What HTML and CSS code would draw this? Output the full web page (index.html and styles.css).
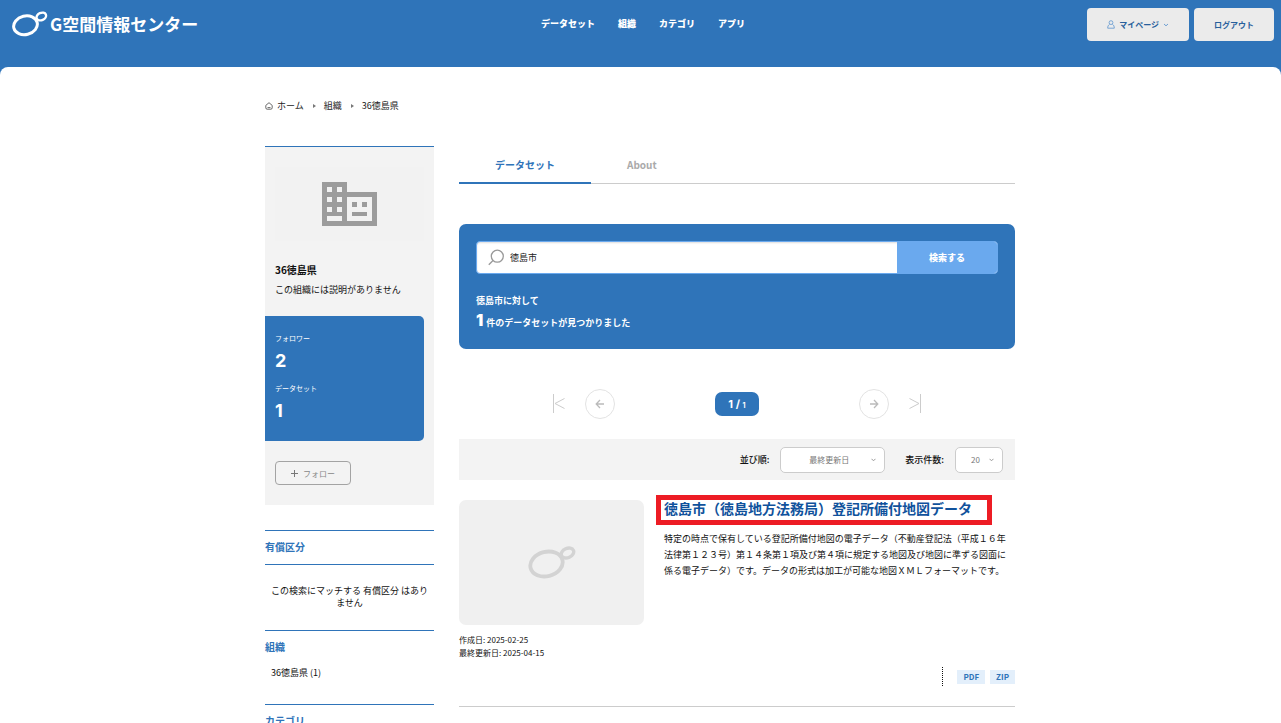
FILE: index.html
```html
<!doctype html>
<html lang="ja">
    <head>
        <title>36徳島県 - G空間情報センター</title>
        <meta charset="UTF-8">
        <meta name="viewport" content="width=device-width, initial-scale=1">
        <link rel="stylesheet" href="styles.css">
    </head>

    <body>
        <!--Header Start-->
        <header class="header">
            <a href="#" class="logo">
                <svg width="36" height="26" viewBox="0 0 36 26" fill="none" stroke="#fff">
                    <ellipse cx="13.5" cy="14.3" rx="12" ry="9.3" stroke-width="3" transform="rotate(-14 13.5 14.3)"/>
                    <ellipse cx="29.3" cy="5.5" rx="5" ry="3.6" stroke-width="2.4" transform="rotate(-24 29.3 5.5)"/>
                </svg>
                <span>G空間情報センター</span>
            </a>
            <nav class="navbar">
                <a href="#">データセット</a>
                <a href="#">組織</a>
                <a href="#">カテゴリ</a>
                <a href="#">アプリ</a>
            </nav>
            <div class="account">
                <button type="button" class="mypage">
                    <svg width="8" height="9" viewBox="0 0 8 9" fill="none" stroke="#6e9fd2" stroke-width="0.9">
                        <circle cx="4" cy="2.6" r="1.9"/>
                        <path d="M2.6 4.4C1.2 5 .7 6.4.7 8.2h6.6c0-1.8-.5-3.2-1.9-3.8"/>
                    </svg>
                    マイページ
                    <svg width="6" height="4" viewBox="0 0 6 4" fill="none" stroke="#6e9fd2" stroke-width="1"><path d="M1 1l2 1.8L5 1"/></svg>
                </button>
                <button type="button" class="logout">ログアウト</button>
            </div>
        </header>
        <!--Header End-->

        <!--Content Start-->
        <main class="page">
            <nav class="breadcrumb">
                <svg width="8" height="8" viewBox="0 0 8 8" fill="none" stroke="#444" stroke-width="0.8">
                    <path d="M.8 3.4L4 .7l3.2 2.7v2.4q0 1.4-1.4 1.4H2.2Q.8 7.2.8 5.8z"/>
                    <path d="M2.5 5.6h3"/>
                </svg>
                <a href="#" class="home">ホーム</a>
                <span class="arrow"></span>
                <a href="#">組織</a>
                <span class="arrow"></span>
                <a href="#">36徳島県</a>
            </nav>

            <div class="columns">
                <!--Sidebar-->
                <aside class="sidebar">
                    <section class="org">
                        <div class="org-image">
                            <svg width="55" height="44" viewBox="0 0 55 44">
                                <path fill="#9c9c9c" fill-rule="evenodd" d="M0 0h25v10h30v34H0zM5 5v5h5V5zM15 5v5h5V5zM5 15v5h5v-5zM15 15v5h5v-5zM5 25v5h5v-5zM15 25v5h5v-5zM5 34v5h15v-5zM25 15v24h25V15z"/>
                                <path fill="#9c9c9c" d="M30 20h5v5h-5zM40 20h5v5h-5zM30 30h15v4H30z"/>
                            </svg>
                        </div>
                        <h1 class="org-name">36徳島県</h1>
                        <p class="org-text">この組織には説明がありません</p>
                        <dl class="counts">
                            <dt>フォロワー</dt>
                            <dd>2</dd>
                            <dt>データセット</dt>
                            <dd>1</dd>
                        </dl>
                        <button type="button" class="follow">
                            <svg width="7" height="7" viewBox="0 0 7 7" stroke="#777" stroke-width="1"><path d="M3.5 0v7M0 3.5h7"/></svg>
                            フォロー
                        </button>
                    </section>

                    <section class="facet">
                        <h2 class="facet-title line">有償区分</h2>
                        <p class="facet-empty">この検索にマッチする 有償区分 はありません</p>
                    </section>
                    <section class="facet">
                        <h2 class="facet-title">組織</h2>
                        <a href="#" class="facet-item">36徳島県 (1)</a>
                    </section>
                    <section class="facet">
                        <h2 class="facet-title">カテゴリ</h2>
                    </section>
                </aside>

                <!--Main column-->
                <div class="content">
                    <nav class="tabs">
                        <a href="#" class="tab active">データセット</a>
                        <a href="#" class="tab">About</a>
                    </nav>

                    <form class="search">
                        <div class="search-row">
                            <label for="q" class="search-icon" aria-label="検索">
                                <svg width="17" height="17" viewBox="0 0 17 17" fill="none" stroke="#999" stroke-width="1.3">
                                    <circle cx="9.3" cy="7.2" r="6"/>
                                    <path d="M5 11.5L.8 15.7"/>
                                </svg>
                            </label>
                            <input type="text" id="q" class="search-input" value="徳島市">
                            <button type="button" class="search-button">検索する</button>
                        </div>
                        <p class="search-result">徳島市に対して</p>
                        <p class="search-result"><strong>1</strong> 件のデータセットが見つかりました</p>
                    </form>

                    <nav class="pager">
                        <a href="#" class="edge" aria-label="最初">
                            <svg width="12" height="20" viewBox="0 0 12 20" fill="none" stroke="#ccc"><path d="M.5 0v19M11.5 4.5l-9.5 5 9.5 5"/></svg>
                        </a>
                        <a href="#" class="step" aria-label="前へ">
                            <svg width="10" height="10" viewBox="0 0 10 10" fill="none" stroke="#bbb" stroke-width="1.3"><path d="M9 5H1.5M5 1L1.2 5 5 9"/></svg>
                        </a>
                        <span class="current">1 / <small>1</small></span>
                        <a href="#" class="step" aria-label="次へ">
                            <svg width="10" height="10" viewBox="0 0 10 10" fill="none" stroke="#bbb" stroke-width="1.3"><path d="M1 5h7.5M5 1l3.8 4L5 9"/></svg>
                        </a>
                        <a href="#" class="edge" aria-label="最後">
                            <svg width="12" height="20" viewBox="0 0 12 20" fill="none" stroke="#ccc"><path d="M11.5 0v19M.5 4.5l9.5 5-9.5 5"/></svg>
                        </a>
                    </nav>

                    <div class="sort">
                        <label for="order">並び順:</label>
                        <span class="select order">
                            <select id="order">
                                <option>最終更新日</option>
                            </select>
                            <svg width="5" height="4" viewBox="0 0 5 4" fill="none" stroke="#999"><path d="M.5.8l2 2 2-2"/></svg>
                        </span>
                        <label for="rows">表示件数:</label>
                        <span class="select rows">
                            <select id="rows">
                                <option>20</option>
                            </select>
                            <svg width="5" height="4" viewBox="0 0 5 4" fill="none" stroke="#999"><path d="M.5.8l2 2 2-2"/></svg>
                        </span>
                    </div>

                    <article class="dataset">
                        <div class="dataset-left">
                            <div class="thumb">
                                <svg width="48" height="34" viewBox="0 0 48 34" fill="none" stroke="#d3d3d3">
                                    <ellipse cx="18.5" cy="18" rx="16.4" ry="12.2" stroke-width="3.8" transform="rotate(-14 18.5 18)"/>
                                    <ellipse cx="39.5" cy="7" rx="6.5" ry="4.6" stroke-width="3.4" transform="rotate(-24 39.5 7)"/>
                                </svg>
                            </div>
                            <p class="dates">作成日: 2025-02-25<br>最終更新日: 2025-04-15</p>
                        </div>
                        <div class="dataset-right">
                            <h2 class="dataset-title"><a href="#">徳島市（徳島地方法務局）登記所備付地図データ</a></h2>
                            <p class="dataset-text">特定の時点で保有している登記所備付地図の電子データ（不動産登記法（平成１６年法律第１２３号）第１４条第１項及び第４項に規定する地図及び地図に準ずる図面に係る電子データ）です。データの形式は加工が可能な地図ＸＭＬフォーマットです。</p>
                            <div class="formats">
                                <a href="#">PDF</a>
                                <a href="#">ZIP</a>
                            </div>
                        </div>
                    </article>
                </div>
            </div>
        </main>
        <!--Content End-->
    </body>
</html>
```
FILE: styles.css
```css
*{
    box-sizing: border-box;
}

body{
    padding: 0;
    margin: 0;
    font-family: "Noto Sans CJK JP", "Noto Sans", sans-serif;
    font-size: 9px;
    line-height: 16px;
    color: #111;
    background: #2f74b9;
}

h1, h2, p, dl, dd{
    margin: 0;
}

a{
    color: inherit;
    text-decoration: none;
}

button, input, select{
    font-family: inherit;
    margin: 0;
}

button{
    cursor: pointer;
}

svg{
    display: block;
    flex: none;
}

/* Header */
.header{
    display: grid;
    grid-template-columns: 1fr auto 1fr;
    align-items: start;
    padding: 8px 7px 26px 12px;
    color: white;
}

.logo{
    display: flex;
    align-items: center;
    gap: 2px;
    padding-top: 3px;
    font-size: 17px;
    line-height: 26px;
    font-weight: 700;
    white-space: nowrap;
}

.navbar{
    display: flex;
    gap: 23px;
    padding-top: 8px;
    font-weight: 900;
}

.account{
    display: flex;
    justify-content: flex-end;
    gap: 5px;
}

.account button{
    display: flex;
    align-items: center;
    justify-content: center;
    gap: 4px;
    height: 33px;
    padding: 0 20px;
    border: 0;
    border-radius: 4px;
    background: #ebebeb;
    color: #28609c;
    font-size: 8px;
    font-weight: 700;
}

/* Page */
.page{
    min-height: calc(100vh - 67px);
    padding: 31px 21px 0 20px;
    border-radius: 8px 8px 0 0;
    background: white;
}

.breadcrumb, .columns{
    max-width: 750px;
    margin: 0 auto;
}

.breadcrumb{
    display: flex;
    align-items: center;
    color: #222;
}

.breadcrumb .home{
    margin-left: 4px;
}

.breadcrumb .arrow{
    margin: 0 8px 0 9px;
    border: 2px solid transparent;
    border-left: 3px solid #777;
    border-right: 0;
}

.columns{
    display: flex;
    gap: 25px;
    margin-top: 32px;
}

/* Sidebar */
.sidebar{
    flex: 0 0 169px;
}

.org{
    padding: 20px 10px;
    border-top: 1px solid #2f74b9;
    background: #f3f3f3;
}

.org-image{
    display: flex;
    align-items: center;
    justify-content: center;
    height: 74px;
    background: #f2f2f2;
}

.org-name{
    margin-top: 21px;
    font-size: 10px;
    line-height: 16px;
    font-weight: 700;
}

.org-text{
    margin-top: 4px;
}

.counts{
    margin: 18px 0 20px -10px;
    padding: 17px 10px 19px;
    border-radius: 0 5px 5px 0;
    background: #2f74b9;
    color: white;
}

.counts dt{
    font-size: 7px;
    line-height: 11px;
}

.counts dd{
    margin: 6px 0 11px;
    font-family: Inter, sans-serif;
    font-size: 18px;
    line-height: 22px;
    font-weight: 700;
}

.counts dd:last-child{
    margin-bottom: 0;
}

.follow{
    display: flex;
    align-items: center;
    gap: 5px;
    height: 24px;
    padding: 0 15px;
    border: 1px solid #a3a3a3;
    border-radius: 4px;
    background: transparent;
    color: #888;
    font-size: 8px;
}

.facet{
    padding-bottom: 21px;
    border-top: 1px solid #2f74b9;
}

.org + .facet{
    margin-top: 25px;
}

.facet-title{
    padding-top: 8px;
    color: #2f74b9;
    font-size: 10px;
    line-height: 16px;
    font-weight: 700;
}

.facet-title.line{
    padding-bottom: 9px;
    border-bottom: 1px solid #2f74b9;
}

.facet-empty{
    padding: 20px 4px 0;
    line-height: 12px;
    text-align: center;
}

.facet-item{
    display: block;
    padding: 10px 6px 2px;
}

/* Tabs */
.content{
    flex: 1;
    min-width: 0;
}

.tabs{
    display: flex;
    border-bottom: 1px solid #ccc;
    color: #aaa;
    font-size: 10px;
    font-weight: 700;
}

.tab{
    margin-bottom: -1px;
    padding: 11px 36px 9px;
    border-bottom: 2px solid transparent;
}

.tab.active{
    border-color: #2f74b9;
    color: #2f74b9;
}

/* Search */
.search{
    margin-top: 40px;
    padding: 17px 17px 18px;
    border-radius: 7px;
    background: #2f74b9;
    color: white;
}

.search-row{
    display: flex;
    height: 33px;
    margin-bottom: 19px;
    border: 1px solid #6aa9ee;
    border-radius: 4px;
    background: white;
    box-shadow: inset 0 1px 2px #ddd;
}

.search-icon{
    display: flex;
    align-items: center;
    padding: 0 5px 0 11px;
}

.search-input{
    flex: 1;
    min-width: 0;
    padding: 0;
    border: 0;
    outline: 0;
    background: transparent;
    color: #222;
    font-size: 9px;
}

.search-button{
    width: 100px;
    padding: 0;
    border: 0;
    border-radius: 0 3px 3px 0;
    background: #6aa9ee;
    color: white;
    font-size: 9px;
    font-weight: 900;
}

.search-result{
    line-height: 16px;
    font-weight: 700;
}

.search-result strong{
    margin-right: 1px;
    font-family: Inter, sans-serif;
    font-size: 16px;
    line-height: 22px;
}

/* Pager */
.pager{
    display: flex;
    align-items: center;
    justify-content: center;
    margin-top: 40px;
}

.step{
    display: flex;
    align-items: center;
    justify-content: center;
    width: 30px;
    height: 30px;
    margin: 0 20px;
    border: 1px solid #e3e3e3;
    border-radius: 50%;
}

.current{
    margin: 0 80px;
    padding: 0 13px;
    border-radius: 7px;
    background: #2f74b9;
    color: white;
    font-family: Inter, sans-serif;
    font-size: 11px;
    line-height: 24px;
    font-weight: 700;
}

.current small{
    font-size: 7px;
    line-height: 1;
}

/* Sort */
.sort{
    display: flex;
    align-items: center;
    justify-content: flex-end;
    height: 41px;
    margin-top: 20px;
    padding-right: 12px;
    background: #f3f3f3;
    font-weight: 500;
}

.select{
    display: grid;
    align-items: center;
    margin-left: 11px;
}

.select + label{
    margin-left: 20px;
}

.select select, .select svg{
    grid-area: 1 / 1;
}

.select svg{
    justify-self: end;
    margin-right: 9px;
    pointer-events: none;
}

.select select{
    appearance: none;
    height: 26px;
    padding: 0 20px 0 15px;
    border: 1px solid #ccc;
    border-radius: 5px;
    background: white;
    color: #777;
    font-size: 8px;
}

.select.order select{
    width: 105px;
    padding: 0 28px;
}

.select.rows select{
    width: 48px;
}

/* Dataset */
.dataset{
    display: flex;
    gap: 20px;
    padding: 20px 0;
    border-bottom: 1px solid #ccc;
}

.dataset-left{
    flex: 0 0 185px;
}

.thumb{
    display: flex;
    align-items: center;
    justify-content: center;
    height: 125px;
    border-radius: 7px;
    background: #f0f0f0;
}

.dates{
    margin-top: 8px;
    font-size: 8px;
    line-height: 13px;
}

.dataset-right{
    flex: 1;
    display: flex;
    flex-direction: column;
    align-items: flex-start;
}

.dataset-title{
    margin: -5px 0 0 -8px;
    padding: 0 15px 4px 3px;
    border: 5px solid #ed1c24;
    color: #10529c;
    font-size: 14px;
    line-height: 16px;
    font-weight: 700;
}

.dataset-text{
    margin-top: 6px;
    padding-right: 4px;
}

.formats{
    display: flex;
    align-items: center;
    align-self: flex-end;
    gap: 5px;
    height: 19px;
    margin-top: 88px;
    padding-left: 14px;
    border-left: 1px dotted #111;
}

.formats a{
    padding: 0 6px;
    background: #e3effb;
    color: #2f74b9;
    font-size: 8px;
    line-height: 14px;
    font-weight: 700;
}
```
